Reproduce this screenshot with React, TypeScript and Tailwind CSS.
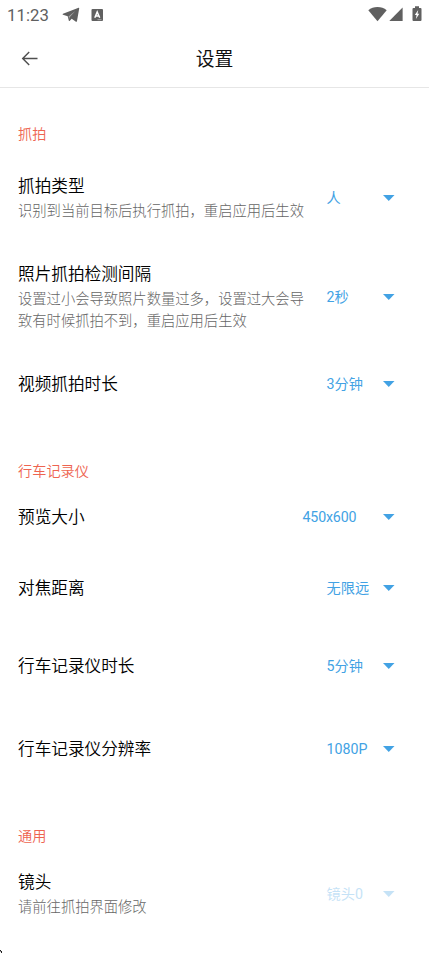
import React from "react";
import clsx from "clsx";

type SettingRowProps = {
  title: string;
  desc?: string;
  value: string;
  className?: string;
  valueClassName?: string;
  disabled?: boolean;
};

const StatusBar = () => {
  return (
    <div className="flex h-[30px] items-center pl-[7px] pr-[7px] text-[#606060]">
      <span className="w-[55px] pt-[2px] font-['Roboto'] text-[16.7px] font-normal leading-[28px] tracking-[0.1px]">
        11:23
      </span>
      <svg className="h-[16px] w-[18px]" viewBox="0 0 18 16">
        <path
          d="M16.600 0.800Q17.300 0.600 17.200 1.500L15 14Q14.800 15.300 13.600 14.600L9.700 11.700 7.800 13.700Q7 14.400 6.800 13.400L5.700 9.300 1 7.800Q0 7.300 1 6.800Z"
          fill="#606060"
        />
        <path d="M6.500 9.600 13.300 4 7.600 10.300 7.300 12Z" fill="#a8a8a8" />
      </svg>
      <svg className="ml-[11px] h-[13px] w-[13px]" viewBox="0 0 13 13">
        <rect x="0.5" y="0" width="11.5" height="12" rx="1" fill="#606060" />
        <path
          d="M3.8 8.700 6.2 3 8.700 8.700M4.600 7h3.200"
          fill="none"
          stroke="#fff"
          strokeWidth="1.5"
        />
        <path d="M6.500 10.700h4" stroke="#bbb" strokeWidth="0.8" />
      </svg>
      <div className="ml-auto flex items-center pb-[2px]">
        <svg className="h-[16px] w-[19px]" viewBox="0 0 19 16">
          <path
            d="M0.300 4.200C2.900 2.100 6 1 9.500 1s6.600 1.100 9.200 3.200L9.500 15.300Z"
            fill="#606060"
          />
        </svg>
        <svg className="ml-[2px] h-[16px] w-[14px]" viewBox="0 0 14 16">
          <path d="M13.600 1.500V15H0.300Z" fill="#606060" />
        </svg>
        <svg className="ml-[9px] h-[16px] w-[10px]" viewBox="0 0 10 16">
          <path
            d="M3 0.300h4V2h1.500q1 0 1 1v11q0 1-1 1h-7q-1 0-1-1V3q0-1 1-1H3Z"
            fill="#606060"
          />
          <path d="M6.200 4 2.800 9h1.800L3.900 13 7.300 7.700H5.500Z" fill="#fff" />
        </svg>
      </div>
    </div>
  );
};

const Header = () => {
  return (
    <header className="grid h-[58px] grid-cols-[60px_1fr_60px] items-center border-b border-[#e6e6e6]">
      <svg
        className="ml-[21px] h-[16px] w-[17px]"
        viewBox="0 0 17 16"
        fill="none"
        stroke="#4f4f4f"
        strokeWidth="1.4"
      >
        <path d="M16.500 7.500H1.700M8.200 1 1.700 7.500 8.200 14" />
      </svg>
      <h1 className="pt-1 text-center text-[18.8px] text-[#111111]">设置</h1>
    </header>
  );
};

const SectionLabel = ({
  children,
  className,
}: {
  children: React.ReactNode;
  className?: string;
}) => {
  return (
    <h2
      className={clsx(
        "flex h-10 items-center pt-px text-[14.2px] font-[350] text-[#ee6450]",
        className
      )}
    >
      {children}
    </h2>
  );
};

const SettingRow = ({
  title,
  desc,
  value,
  className,
  valueClassName = "w-[56px]",
  disabled,
}: SettingRowProps) => {
  return (
    <div className={clsx("flex items-center", className)}>
      <div className={clsx("w-[287px] shrink-0", desc ? "pb-px" : "pt-[2px]")}>
        <div className="text-[16.65px] font-[350] leading-[28px] text-black">
          {title}
        </div>
        {desc && (
          <p className="text-[14.3px] font-light leading-[21.5px] text-[#666666]">
            {desc}
          </p>
        )}
      </div>
      <div
        className={clsx(
          "-ml-6 flex grow items-center justify-end text-[#42a2e4]",
          disabled && "opacity-30"
        )}
      >
        <span
          className={clsx(
            "whitespace-nowrap text-[14.2px] leading-5",
            valueClassName
          )}
        >
          {value}
        </span>
        <svg className="h-[6px] w-[12px]" viewBox="0 0 12 6">
          <path d="M0 0h11.500L5.750 6Z" fill="currentColor" />
        </svg>
      </div>
    </div>
  );
};

const App = () => {
  return (
    <div className="relative h-[953px] w-[429px] overflow-hidden bg-white font-['Roboto','Noto_Sans_CJK_SC',sans-serif]">
      <StatusBar />
      <Header />
      <main className="pl-[18px] pr-[34.5px] pt-[26px]">
        <SectionLabel>抓拍</SectionLabel>
        <SettingRow
          className="h-[88px]"
          title="抓拍类型"
          desc="识别到当前目标后执行抓拍，重启应用后生效"
          value="人"
        />
        <SettingRow
          className="h-[110px]"
          title="照片抓拍检测间隔"
          desc="设置过小会导致照片数量过多，设置过大会导致有时候抓拍不到，重启应用后生效"
          value="2秒"
        />
        <SettingRow className="h-16" title="视频抓拍时长" value="3分钟" />

        <SectionLabel className="mt-[35px]">行车记录仪</SectionLabel>
        <SettingRow
          className="h-[52px]"
          title="预览大小"
          value="450x600"
          valueClassName="w-[80px] tracking-[-0.15px]"
        />
        <SettingRow className="h-[90px]" title="对焦距离" value="无限远" />
        <SettingRow className="h-[65px]" title="行车记录仪时长" value="5分钟" />
        <SettingRow
          className="h-[102px]"
          title="行车记录仪分辨率"
          value="1080P"
        />

        <SectionLabel className="mt-4">通用</SectionLabel>
        <SettingRow
          className="h-[76px]"
          title="镜头"
          desc="请前往抓拍界面修改"
          value="镜头0"
          disabled
        />
      </main>
      <svg
        className="absolute bottom-0 left-0 h-[3px] w-[2px]"
        viewBox="0 0 2 3"
      >
        <path d="M0 0h1v1h1v2H1V1.500H0Z" fill="#222" />
      </svg>
    </div>
  );
};

export default App;
